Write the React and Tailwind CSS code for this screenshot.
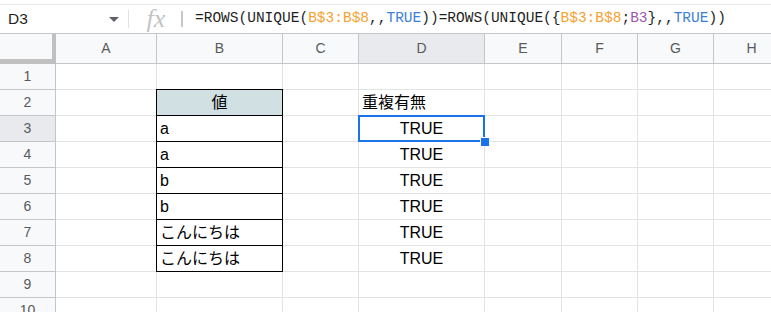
import React from 'react';

const cols = [
    { label: 'A', w: 'w-[101px]' },
    { label: 'B', w: 'w-[126px]' },
    { label: 'C', w: 'w-[76px]' },
    { label: 'D', w: 'w-[126px]' },
    { label: 'E', w: 'w-[77px]' },
    { label: 'F', w: 'w-[76px]' },
    { label: 'G', w: 'w-[76px]' },
    { label: 'H', w: 'w-[76px]' },
];

const values = ['a', 'a', 'b', 'b', 'こんにちは', 'こんにちは'];

const cellFont = { fontFamily: '"Liberation Sans", Arial, "Noto Sans CJK JP", sans-serif' };

const Orange = ({ children }) => <span className="text-[#f6a130]">{children}</span>;
const Blue = ({ children }) => <span className="text-[#3b7fd9]">{children}</span>;
const Purple = ({ children }) => <span className="text-[#9c58b1]">{children}</span>;

function FormulaBar() {
    return (
        <div className="h-[34px] pt-[4px] bg-white">
            <div className="h-[30px] border-t border-[#e8e8e8] border-b border-b-[#c4c7c5] flex items-center">
                <div className="w-[128px] flex items-center justify-between pl-[8px] pr-[9px]">
                    <span className="text-[15.5px] text-[#1f1f1f]" style={cellFont}>D3</span>
                    <span className="w-0 h-0 border-l-[5px] border-r-[5px] border-t-[5px] border-l-transparent border-r-transparent border-t-[#5f6368]"></span>
                </div>
                <div className="w-px h-[18px] bg-[#e0e0e0]"></div>
                <div className="w-[52px] flex justify-center pl-[2px]">
                    <span className="text-[26px] italic text-[#c4c4c4] leading-none" style={{ fontFamily: '"Liberation Serif", serif' }}>fx</span>
                </div>
                <div className="w-[2px] h-[16px] bg-[#c4c7c5]"></div>
                <div className="pl-[12px] text-[14.5px] text-[#1f1f1f] whitespace-nowrap" style={{ fontFamily: '"Liberation Mono", monospace' }}>
                    =ROWS(UNIQUE(<Orange>B$3:B$8</Orange>,,<Blue>TRUE</Blue>))=ROWS(UNIQUE({'{'}<Orange>B$3:B$8</Orange>;<Purple>B3</Purple>{'}'},,<Blue>TRUE</Blue>))
                </div>
            </div>
        </div>
    );
}

function Cell({ col, row }) {
    const inTable = col === 'B' && row >= 2 && row <= 8;
    let content = null;
    let cls = `relative flex items-end pb-0 px-[3px] text-[16px] text-black border-b border-r`;

    if (inTable) {
        cls += ' border-black border-l -ml-px w-[127px]';
        if (row === 2) cls += ' border-t -mt-px h-[27px] bg-[#d0e0e3] justify-center';
        content = row === 2 ? '値' : values[row - 3];
    } else {
        const w = cols.find((c) => c.label === col).w;
        cls += ` ${w} border-[#e2e3e3]`;
    }
    if (col === 'D' && row === 2) content = '重複有無';
    if (col === 'D' && row >= 3 && row <= 8) {
        content = 'TRUE';
        cls += ' justify-center';
    }
    const selected = col === 'D' && row === 3;

    return (
        <div className={`shrink-0 ${cls}`}>
            {content}
            {selected && (
                <>
                    <div className="absolute z-10 -left-px -top-px w-[127px] h-[27px] border-2 border-[#1a73e8]"></div>
                    <div className="absolute z-20 -right-[6px] -bottom-[6px] w-[10px] h-[10px] bg-[#1a73e8] border border-white"></div>
                </>
            )}
        </div>
    );
}

function Grid() {
    const rows = Array.from({ length: 10 }, (_, i) => i + 1);
    return (
        <div className="flex flex-col" style={cellFont}>
            <div className="flex h-[30px]">
                <div className="w-[56px] shrink-0 bg-[#f8f9fa] border-r-[4px] border-b-[5px] border-[#c0c0c0]"></div>
                {cols.map((c) => (
                    <div key={c.label} className={`${c.w} shrink-0 flex items-center justify-center text-[14px] text-[#575a5e] border-r border-b border-[#c4c7c5] ${c.label === 'D' ? 'bg-[#e8eaed]' : 'bg-[#f8f9fa]'}`}>
                        {c.label}
                    </div>
                ))}
            </div>
            {rows.map((r) => (
                <div key={r} className="flex h-[26px]">
                    <div className={`w-[56px] shrink-0 flex items-center justify-center text-[14px] text-[#575a5e] border-r border-b border-[#c4c7c5] ${r === 3 ? 'bg-[#e8eaed]' : 'bg-[#f8f9fa]'}`}>
                        {r}
                    </div>
                    {cols.map((c) => (
                        <Cell key={c.label} col={c.label} row={r} />
                    ))}
                </div>
            ))}
        </div>
    );
}

export default function App() {
    return (
        <div className="w-[771px] h-[312px] overflow-hidden bg-white">
            <FormulaBar />
            <Grid />
        </div>
    );
}
